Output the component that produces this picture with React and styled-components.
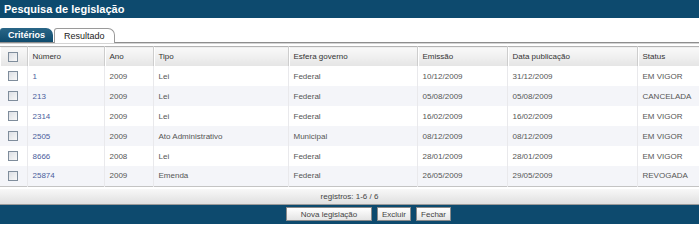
import React from 'react';
import styled, { createGlobalStyle } from 'styled-components';

const GlobalStyle = createGlobalStyle`
  html, body {
    margin: 0;
    padding: 0;
    background: #ffffff;
  }
  body {
    font-family: "Liberation Sans", Arial, sans-serif;
    font-size: 8px;
    color: #555;
  }
`;

const columns = [
  { key: 'check', label: '', width: 27 },
  { key: 'numero', label: 'Número', width: 77 },
  { key: 'ano', label: 'Ano', width: 49 },
  { key: 'tipo', label: 'Tipo', width: 135 },
  { key: 'esfera', label: 'Esfera governo', width: 129 },
  { key: 'emissao', label: 'Emissão', width: 90 },
  { key: 'publicacao', label: 'Data publicação', width: 130 },
  { key: 'status', label: 'Status', width: 62 },
];

const rows = [
  { numero: '1', ano: '2009', tipo: 'Lei', esfera: 'Federal', emissao: '10/12/2009', publicacao: '31/12/2009', status: 'EM VIGOR' },
  { numero: '213', ano: '2009', tipo: 'Lei', esfera: 'Federal', emissao: '05/08/2009', publicacao: '05/08/2009', status: 'CANCELADA' },
  { numero: '2314', ano: '2009', tipo: 'Lei', esfera: 'Federal', emissao: '16/02/2009', publicacao: '16/02/2009', status: 'EM VIGOR' },
  { numero: '2505', ano: '2009', tipo: 'Ato Administrativo', esfera: 'Municipal', emissao: '08/12/2009', publicacao: '08/12/2009', status: 'EM VIGOR' },
  { numero: '8666', ano: '2008', tipo: 'Lei', esfera: 'Federal', emissao: '28/01/2009', publicacao: '28/01/2009', status: 'EM VIGOR' },
  { numero: '25874', ano: '2009', tipo: 'Emenda', esfera: 'Federal', emissao: '26/05/2009', publicacao: '29/05/2009', status: 'REVOGADA' },
];

const App = () => {
  return (
    <>
      <GlobalStyle />
      <Page>
        <TitleBar>Pesquisa de legislação</TitleBar>
        <TabStrip>
          <Tab>Critérios</Tab>
          <Tab active>Resultado</Tab>
        </TabStrip>
        <ResultTable>
          <colgroup>
            {columns.map((col) => (
              <col key={col.key} style={{ width: col.width }} />
            ))}
          </colgroup>
          <thead>
            <tr>
              {columns.map((col) => (
                <HeadCell key={col.key} center={col.key === 'check'}>
                  {col.key === 'check' ? <Check type="checkbox" /> : col.label}
                </HeadCell>
              ))}
            </tr>
          </thead>
          <tbody>
            {rows.map((row, index) => (
              <BodyRow key={row.numero} striped={index % 2 === 1}>
                <Cell center>
                  <Check type="checkbox" />
                </Cell>
                <Cell>
                  <NumberLink href="#">{row.numero}</NumberLink>
                </Cell>
                <Cell>{row.ano}</Cell>
                <Cell>{row.tipo}</Cell>
                <Cell>{row.esfera}</Cell>
                <Cell>{row.emissao}</Cell>
                <Cell>{row.publicacao}</Cell>
                <Cell>{row.status}</Cell>
              </BodyRow>
            ))}
          </tbody>
        </ResultTable>
        <Pager>registros: 1-6 / 6</Pager>
        <ActionBar>
          <ActionButton width={86}>Nova legislação</ActionButton>
          <ActionButton width={34}>Excluir</ActionButton>
          <ActionButton width={35}>Fechar</ActionButton>
        </ActionBar>
      </Page>
    </>
  );
};

export default App;

const Page = styled.div`
  width: 699px;
  height: 224px;
  display: flex;
  flex-direction: column;
  overflow: hidden;
`;

const TitleBar = styled.div`
  height: 18px;
  background: #0d4a6e;
  color: #ffffff;
  font-size: 11px;
  font-weight: bold;
  line-height: 18px;
  padding-left: 4px;
`;

const TabStrip = styled.div`
  display: flex;
  align-items: flex-end;
  height: 14px;
  margin-top: 10px;
  border-bottom: 1px solid #8e8e8e;
  box-shadow: 0 1px 0 #d4d4d4;
`;

const Tab = styled.div`
  box-sizing: border-box;
  height: ${(p) => (p.active ? '15px' : '14px')};
  margin-bottom: ${(p) => (p.active ? '-1px' : '0')};
  padding: 0 ${(p) => (p.active ? '9px' : '8px')};
  margin-left: ${(p) => (p.active ? '1px' : '0')};
  border-radius: 3px 7px 0 0;
  font-size: 9px;
  line-height: 14px;
  font-weight: ${(p) => (p.active ? 'normal' : 'bold')};
  color: ${(p) => (p.active ? '#222' : '#ffffff')};
  background: ${(p) =>
    p.active ? '#ffffff' : 'linear-gradient(#2a6687, #0f4b6d)'};
  border: ${(p) => (p.active ? '1px solid #9a9a9a' : 'none')};
  border-bottom: none;
  position: relative;
  z-index: 1;
`;

const ResultTable = styled.table`
  width: 699px;
  table-layout: fixed;
  border-collapse: collapse;
  margin-top: 3px;
  border-top: 1px solid #b4b4b4;
  border-bottom: 1px solid #c4c4c4;
`;

const HeadCell = styled.th`
  height: 19px;
  padding: 0 0 0 ${(p) => (p.center ? '0' : '5px')};
  text-align: ${(p) => (p.center ? 'center' : 'left')};
  font-weight: normal;
  color: #333;
  background: linear-gradient(#f9f9f9, #e5e5e5);
  border-left: 1px solid #cdcdcd;
  box-shadow: inset 1px 0 0 #ffffff;
  vertical-align: middle;
  white-space: nowrap;

  &:first-child {
    border-left: none;
  }
`;

const BodyRow = styled.tr`
  height: 20px;
  background: ${(p) => (p.striped ? '#f4f5f9' : '#ffffff')};
`;

const Cell = styled.td`
  padding: 0 0 0 ${(p) => (p.center ? '0' : '5px')};
  text-align: ${(p) => (p.center ? 'center' : 'left')};
  color: #555;
  border-left: 1px solid #e9e9ec;
  vertical-align: middle;
  white-space: nowrap;
  overflow: hidden;

  &:first-child {
    border-left: none;
  }
`;

const Check = styled.input`
  appearance: none;
  display: block;
  margin: 0 auto;
  width: 10px;
  height: 10px;
  box-sizing: border-box;
  border: 1px solid #7f8d9c;
  background: linear-gradient(135deg, #dcdfe4, #f8f8f8);
`;

const NumberLink = styled.a`
  color: #4a5d9c;
  text-decoration: none;
`;

const Pager = styled.div`
  height: 15px;
  margin-top: 2px;
  line-height: 15px;
  text-align: center;
  color: #444;
  background: linear-gradient(#f8f8f8, #e0e0e0);
  border-bottom: 1px solid #9a9a9a;
`;

const ActionBar = styled.div`
  flex: 1;
  display: flex;
  align-items: center;
  justify-content: center;
  gap: 5px;
  padding-left: 38px;
  background: #0d4a6e;
`;

const ActionButton = styled.button`
  box-sizing: border-box;
  width: ${(p) => p.width}px;
  height: 14px;
  padding: 0;
  font-family: "Liberation Sans", Arial, sans-serif;
  font-size: 8px;
  color: #444;
  background: linear-gradient(#ffffff, #e4e4e4);
  border: 1px solid #8a8a8a;
  border-radius: 0;
`;
